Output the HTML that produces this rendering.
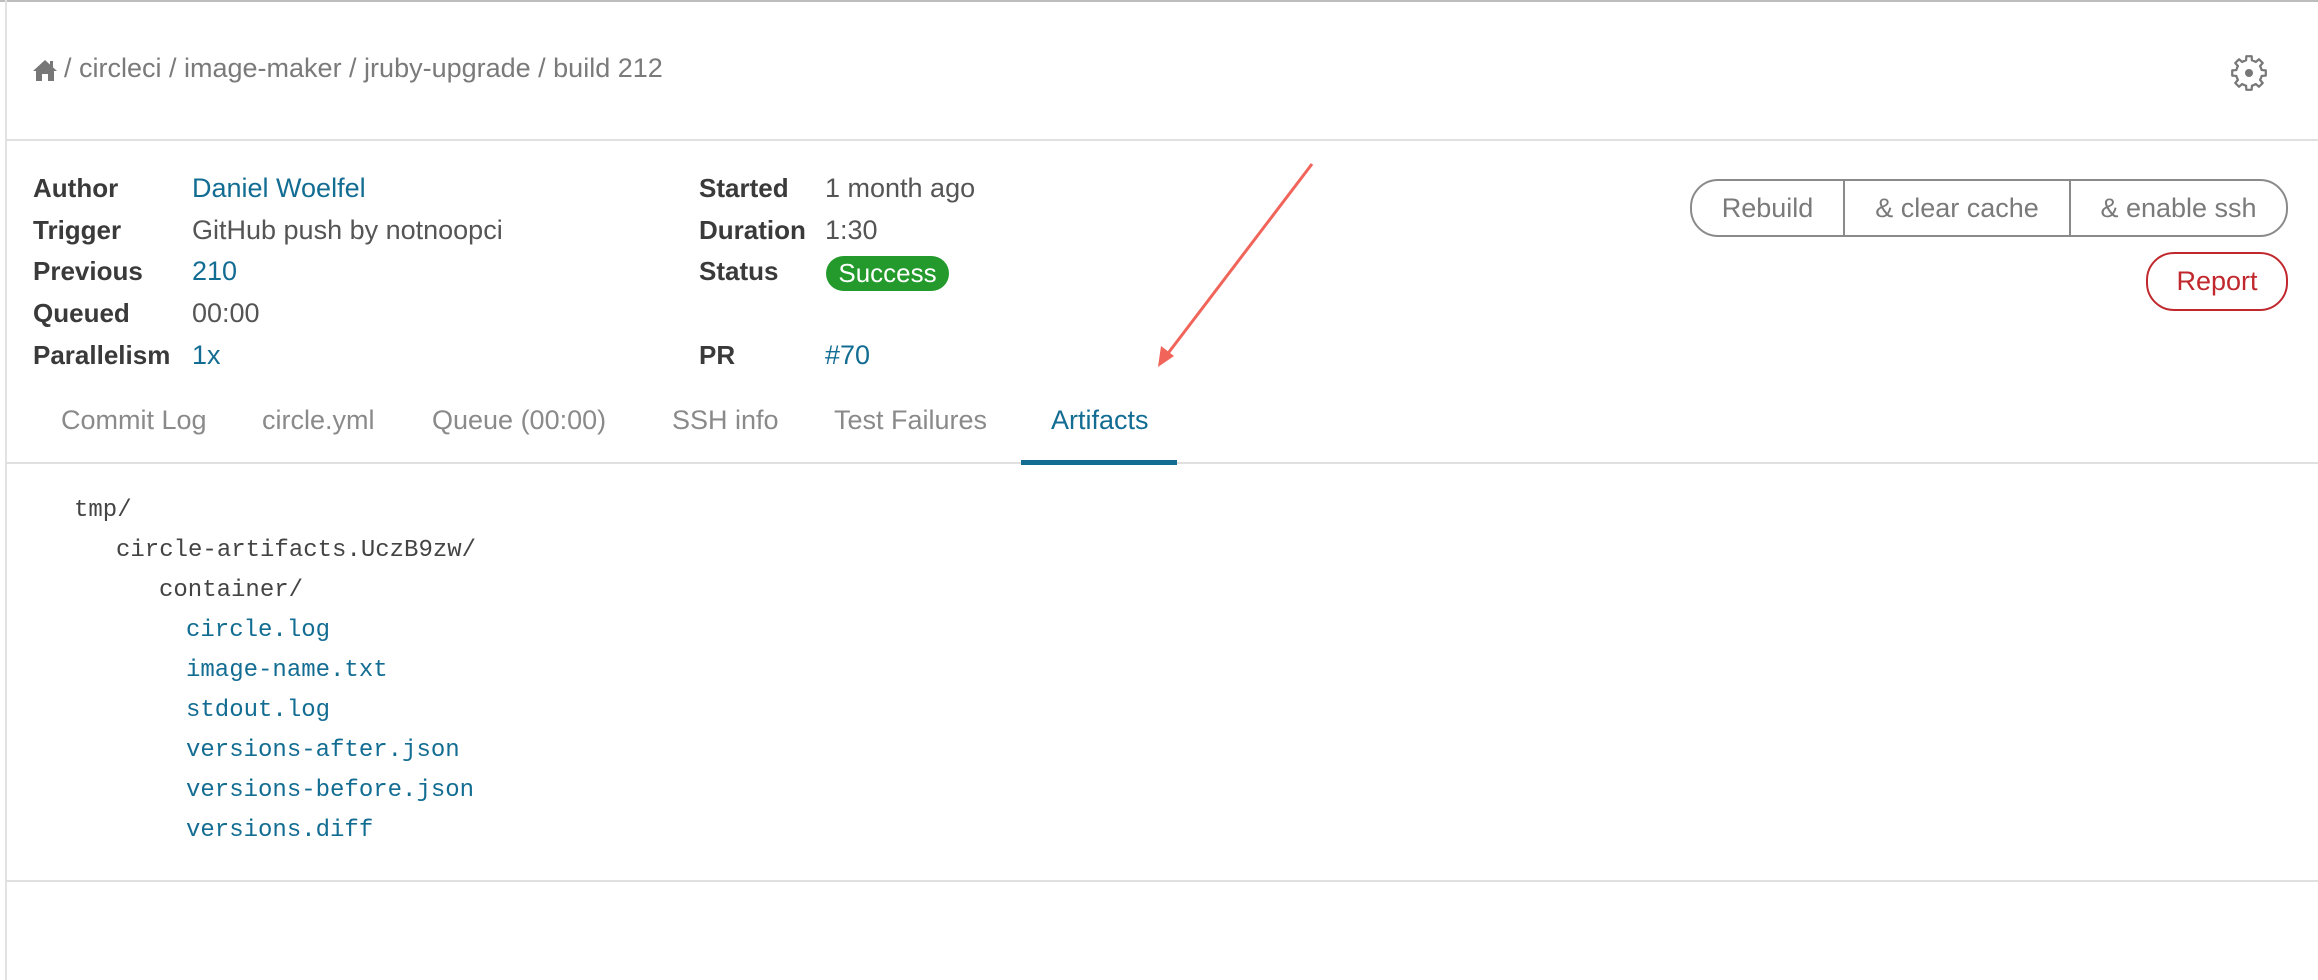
<!DOCTYPE html>
<html><head><meta charset="utf-8"><style>
body{margin:0;width:2318px;height:980px;background:#fff;position:relative;overflow:hidden;font-family:"Liberation Sans",sans-serif;}
.a{position:absolute;white-space:nowrap;}
.lab{font-weight:bold;color:#3a3a3a;font-size:26px;}
.val{color:#555;font-size:27px;}
.lnk{color:#136d93;font-size:27px;}
.tab{color:#8a8a8a;font-size:27px;}
.mono{font-family:"Liberation Mono",monospace;font-size:24px;color:#444;}
.ml{color:#136d93;}
</style></head><body>
<div class="a" style="left:0;top:0;width:2318px;height:2px;background:#bdbdbd"></div>
<div class="a" style="left:5px;top:0;width:2px;height:980px;background:#e2e2e2"></div>
<div class="a" style="left:6px;top:139px;width:2312px;height:2px;background:#e0e0e0"></div>
<div class="a" style="left:6px;top:462px;width:2312px;height:2px;background:#e0e0e0"></div>
<div class="a" style="left:1021px;top:460px;width:156px;height:5px;background:#136d93"></div>
<div class="a" style="left:6px;top:880px;width:2312px;height:2px;background:#e0e0e0"></div>

<svg class="a" style="left:32px;top:58px" width="26" height="24" viewBox="0 0 26 24"><path d="M13 2 L1 13 L4 13 L4 23 L10 23 L10 16 L16 16 L16 23 L22 23 L22 13 L25 13 Z" fill="#777"/><rect x="18" y="3" width="3" height="6" fill="#777"/></svg>
<div class="a" style="left:64px;top:53px;font-size:27px;color:#7a7a7a">/ circleci / image-maker / jruby-upgrade / build 212</div>

<svg class="a" style="left:2229px;top:53px" width="40" height="40" viewBox="-20 -20 40 40">
<g fill="none" stroke="#777" stroke-width="2.2" stroke-linejoin="round" stroke-linecap="round">
<path id="t" d="M12.01 -4.97 L12.67 -2.92 L16.79 -2.66 L16.79 2.66 L12.67 2.92 L12.01 4.97"/>
<use href="#t" transform="rotate(45)"/><use href="#t" transform="rotate(90)"/><use href="#t" transform="rotate(135)"/><use href="#t" transform="rotate(180)"/><use href="#t" transform="rotate(225)"/><use href="#t" transform="rotate(270)"/><use href="#t" transform="rotate(315)"/>
</g><circle r="4" fill="#777"/></svg>

<div class="a lab" style="left:33px;top:173px">Author</div>
<div class="a lnk" style="left:192px;top:173px">Daniel Woelfel</div>
<div class="a lab" style="left:33px;top:215px">Trigger</div>
<div class="a val" style="left:192px;top:215px">GitHub push by notnoopci</div>
<div class="a lab" style="left:33px;top:256px">Previous</div>
<div class="a lnk" style="left:192px;top:256px">210</div>
<div class="a lab" style="left:33px;top:298px">Queued</div>
<div class="a val" style="left:192px;top:298px">00:00</div>
<div class="a lab" style="left:33px;top:340px">Parallelism</div>
<div class="a lnk" style="left:192px;top:340px">1x</div>

<div class="a lab" style="left:699px;top:173px">Started</div>
<div class="a val" style="left:825px;top:173px">1 month ago</div>
<div class="a lab" style="left:699px;top:215px">Duration</div>
<div class="a val" style="left:825px;top:215px">1:30</div>
<div class="a lab" style="left:699px;top:256px">Status</div>
<div class="a" style="left:826px;top:256px;width:123px;height:35px;border-radius:18px;background:#239a2b;color:#fff;font-size:26px;line-height:35px;text-align:center">Success</div>
<div class="a lab" style="left:699px;top:340px">PR</div>
<div class="a lnk" style="left:825px;top:340px">#70</div>

<div class="a" style="left:1690px;top:179px;width:594px;height:54px;border:2px solid #8a8a8a;border-radius:28px;font-size:27px;color:#7a7a7a;line-height:54px">
<div class="a" style="left:0;width:151px;text-align:center">Rebuild</div>
<div class="a" style="left:151px;width:2px;height:54px;background:#8a8a8a"></div>
<div class="a" style="left:153px;width:224px;text-align:center">&amp; clear cache</div>
<div class="a" style="left:377px;width:2px;height:54px;background:#8a8a8a"></div>
<div class="a" style="left:379px;width:215px;text-align:center">&amp; enable ssh</div>
</div>
<div class="a" style="left:2146px;top:252px;width:138px;height:55px;border:2px solid #c0282d;border-radius:28px;font-size:27px;color:#c0282d;line-height:55px;text-align:center">Report</div>

<div class="a tab" style="left:61px;top:405px">Commit Log</div>
<div class="a tab" style="left:262px;top:405px">circle.yml</div>
<div class="a tab" style="left:432px;top:405px">Queue (00:00)</div>
<div class="a tab" style="left:672px;top:405px">SSH info</div>
<div class="a tab" style="left:834px;top:405px">Test Failures</div>
<div class="a tab" style="left:1051px;top:405px;color:#136d93">Artifacts</div>

<svg class="a" style="left:0;top:0" width="2318" height="980"><line x1="1312" y1="164" x2="1166" y2="356" stroke="#f0645a" stroke-width="3"/><path d="M1158 367 L1161 346 L1174 356 Z" fill="#f0645a"/></svg>

<div class="a mono" style="left:74px;top:497px">tmp/</div>
<div class="a mono" style="left:116px;top:537px">circle-artifacts.UczB9zw/</div>
<div class="a mono" style="left:159px;top:577px">container/</div>
<div class="a mono ml" style="left:186px;top:617px">circle.log</div>
<div class="a mono ml" style="left:186px;top:657px">image-name.txt</div>
<div class="a mono ml" style="left:186px;top:697px">stdout.log</div>
<div class="a mono ml" style="left:186px;top:737px">versions-after.json</div>
<div class="a mono ml" style="left:186px;top:777px">versions-before.json</div>
<div class="a mono ml" style="left:186px;top:817px">versions.diff</div>
</body></html>
